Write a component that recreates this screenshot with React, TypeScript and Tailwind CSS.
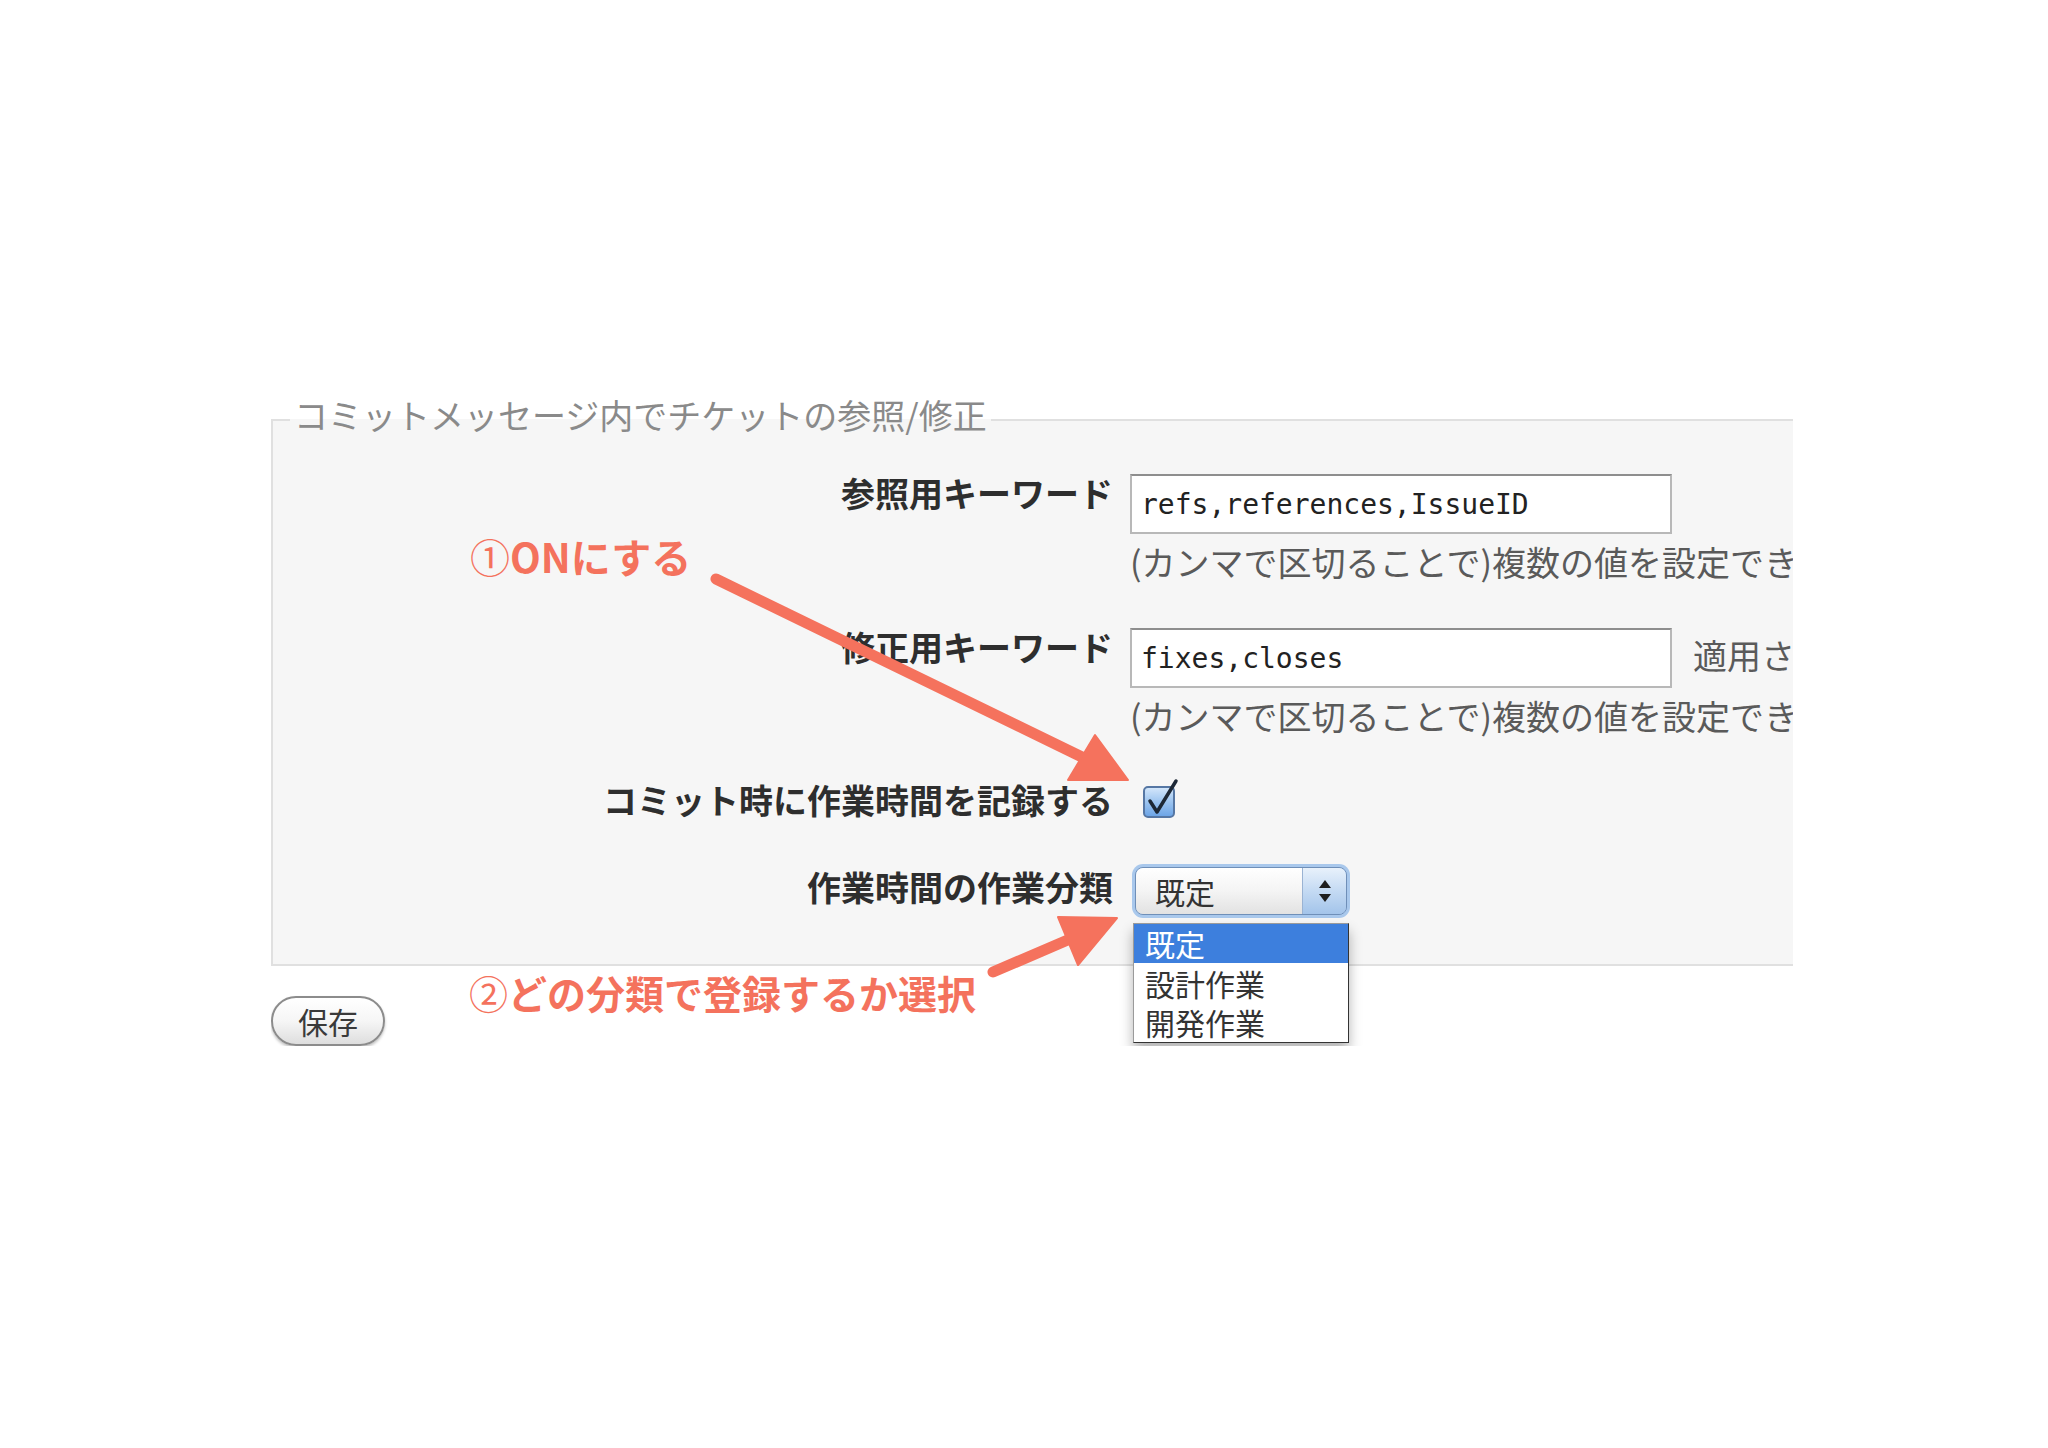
export default function App() {
  return (
    <div className="relative w-[2048px] h-[1448px] bg-white overflow-hidden font-['Noto_Sans_CJK_JP',sans-serif] text-[#333]">
      <div className="ml-[271px] w-[1522px] pt-[395px] overflow-hidden">
        <fieldset className="w-[1600px] border-2 border-[#e0e0e0] bg-[#f6f6f6] pb-[46px]">
          <legend className="ml-[17px] px-[4px] pb-[10px] text-[34px] leading-[40px] text-[#8a8a8a]">
            コミットメッセージ内でチケットの参照/修正
          </legend>

          {/* 参照用 */}
          <div className="flex items-start mt-[29px]">
            <label className="w-[840px] shrink-0 text-right font-bold text-[34px] leading-[40px] -mt-[1px] text-[#2e2e2e]">
              参照用キーワード
            </label>
            <div className="ml-[17px]">
              <input
                readOnly
                defaultValue="refs,references,IssueID"
                className="w-[542px] h-[60px] bg-white border-2 border-[#b8b8b8] border-t-[#8e8e8e] px-[9px] text-[28px] text-[#222] font-['DejaVu_Sans_Mono',monospace] outline-none"
              />
              <div className="mt-[8px] text-[34px] leading-[40px] text-[#5a5a5a] whitespace-nowrap">
                (カンマで区切ることで)複数の値を設定できます。
              </div>
            </div>
          </div>

          {/* 修正用 */}
          <div className="flex items-start mt-[46px]">
            <label className="w-[840px] shrink-0 text-right font-bold text-[34px] leading-[40px] -mt-[1px] text-[#2e2e2e]">
              修正用キーワード
            </label>
            <div className="ml-[17px]">
              <div className="flex items-center">
                <input
                  readOnly
                  defaultValue="fixes,closes"
                  className="w-[542px] h-[60px] bg-white border-2 border-[#b8b8b8] border-t-[#8e8e8e] px-[9px] text-[28px] text-[#222] font-['DejaVu_Sans_Mono',monospace] outline-none"
                />
                <span className="ml-[21px] mb-[6px] text-[34px] leading-[40px] text-[#5a5a5a] whitespace-nowrap">
                  適用されるステータス
                </span>
              </div>
              <div className="mt-[8px] text-[34px] leading-[40px] text-[#5a5a5a] whitespace-nowrap">
                (カンマで区切ることで)複数の値を設定できます。
              </div>
            </div>
          </div>

          {/* 作業時間を記録 */}
          <div className="flex items-center mt-[46px] h-[40px]">
            <label className="w-[840px] shrink-0 text-right font-bold text-[34px] leading-[40px] mb-[4px] text-[#2e2e2e]">
              コミット時に作業時間を記録する
            </label>
            <svg width="40" height="44" viewBox="0 0 40 44" className="ml-[30px] overflow-visible">
              <defs>
                <linearGradient id="cb" x1="0" y1="0" x2="0" y2="1">
                  <stop offset="0" stopColor="#d6e8fb" />
                  <stop offset="0.5" stopColor="#9cc4f0" />
                  <stop offset="1" stopColor="#6aa3e6" />
                </linearGradient>
              </defs>
              <rect x="1" y="7" width="30" height="30" rx="4" fill="url(#cb)" stroke="#5677a4" strokeWidth="2" />
              <path d="M7 21 L14 32 L33 1" fill="none" stroke="#1d2836" strokeWidth="3.5" strokeLinecap="round" strokeLinejoin="round" />
            </svg>
          </div>

          {/* 作業分類 */}
          <div className="flex items-center mt-[42px]">
            <label className="w-[840px] shrink-0 text-right font-bold text-[34px] leading-[40px] mb-[8px] text-[#2e2e2e]">
              作業時間の作業分類
            </label>
            <div className="relative ml-[19px] w-[218px] h-[54px] rounded-[11px] bg-[#a9c8ec] p-[3px]">
              <div className="flex h-full rounded-[8px] border border-[#6f8fb8] overflow-hidden">
                <div className="flex-1 flex items-center pl-[19px] bg-linear-to-b from-white via-[#f4f4f4] to-[#e2e2e2] text-[30px] text-[#333]">
                  既定
                </div>
                <div className="w-[44px] flex flex-col items-center justify-center gap-[6px] border-l border-[#9ab3d3] bg-linear-to-b from-[#e8f1fb] via-[#c4daf3] to-[#a3c4ea]">
                  <span className="w-0 h-0 border-x-[6px] border-x-transparent border-b-[8px] border-b-[#1e1e1e]" />
                  <span className="w-0 h-0 border-x-[6px] border-x-transparent border-t-[8px] border-t-[#1e1e1e]" />
                </div>
              </div>
              <ul className="absolute left-[1px] top-[59px] w-[216px] bg-white border border-[#9a9a9a] border-r-[#333] border-b-[#333] shadow-[0_8px_12px_rgba(0,0,0,0.3)] z-10">
                <li className="h-[39px] leading-[39px] pl-[11px] text-[30px] bg-[#3d7fdd] text-white">既定</li>
                <li className="h-[40px] leading-[40px] pl-[11px] text-[30px] text-[#333]">設計作業</li>
                <li className="h-[39px] leading-[39px] pl-[11px] text-[30px] text-[#333]">開発作業</li>
              </ul>
            </div>
          </div>
        </fieldset>

        <button className="mt-[30px] w-[114px] h-[50px] rounded-full border-2 border-[#8c8c8c] bg-linear-to-b from-white via-[#f6f6f6] to-[#dedede] text-[30px] leading-none text-[#3a3a3a] shadow-[0_2px_3px_rgba(0,0,0,0.25)]">
          保存
        </button>
      </div>

      {/* annotations */}
      <div className="absolute left-[470px] top-[533px] text-[40px] leading-[46px] font-bold text-[#f4725d] whitespace-nowrap">
        <span className="font-normal">①</span>ONにする
      </div>
      <div className="absolute left-[469px] top-[969px] text-[39px] leading-[46px] font-bold text-[#f4725d] whitespace-nowrap">
        <span className="font-normal">②</span>どの分類で登録するか選択
      </div>

      <svg className="absolute inset-0 pointer-events-none" width="2048" height="1448" viewBox="0 0 2048 1448">
        <g fill="#f5725d" stroke="#f5725d">
          <line x1="716" y1="579" x2="1084" y2="758" strokeWidth="11" strokeLinecap="round" />
          <polygon points="1128,780 1095,735 1068,780" strokeWidth="2" strokeLinejoin="round" />
          <line x1="993" y1="972" x2="1070" y2="939" strokeWidth="11" strokeLinecap="round" />
          <polygon points="1117,918 1058,917 1078,965" strokeWidth="2" strokeLinejoin="round" />
        </g>
      </svg>
    </div>
  );
}
